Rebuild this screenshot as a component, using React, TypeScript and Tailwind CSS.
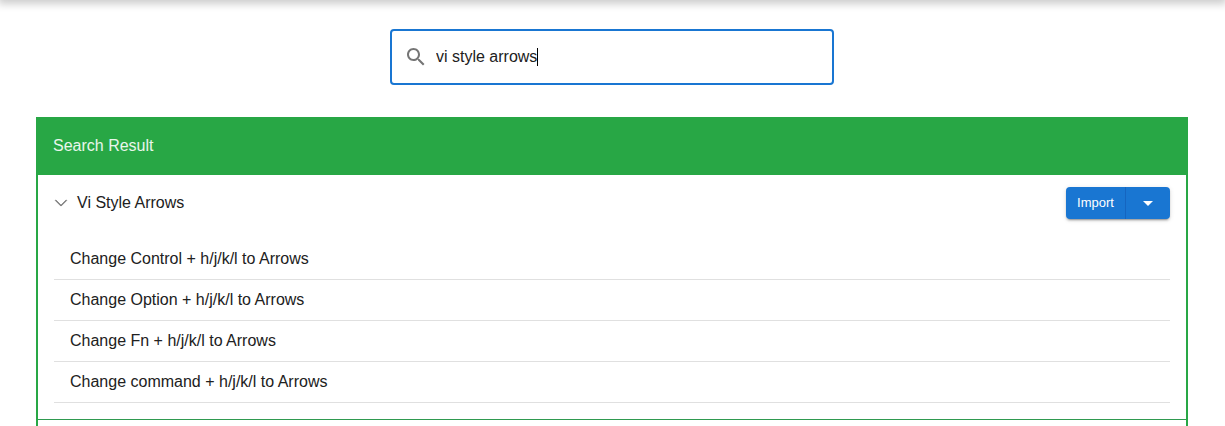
const rules = [
  "Change Control + h/j/k/l to Arrows",
  "Change Option + h/j/k/l to Arrows",
  "Change Fn + h/j/k/l to Arrows",
  "Change command + h/j/k/l to Arrows",
];

function SearchIcon() {
  return (
    <svg className="size-6 shrink-0 text-[#757575]" viewBox="0 0 24 24" fill="currentColor" aria-hidden="true">
      <path d="M15.5 14h-.79l-.28-.27C15.41 12.59 16 11.11 16 9.5 16 5.91 13.09 3 9.5 3S3 5.91 3 9.5 5.91 16 9.5 16c1.61 0 3.09-.59 4.23-1.57l.27.28v.79l5 4.99L20.49 19l-4.99-5zm-6 0C7.01 14 5 11.99 5 9.5S7.01 5 9.5 5 14 7.01 14 9.5 11.99 14 9.5 14z" />
    </svg>
  );
}

function SearchField() {
  return (
    <label className="mx-auto flex h-14 w-full max-w-[444px] cursor-text items-center rounded-sm border-2 border-[#1976d2] px-3">
      <SearchIcon />
      <input
        type="text"
        aria-label="Search"
        defaultValue="vi style arrows"
        className="ml-2 field-sizing-content min-w-0 bg-transparent text-base leading-6 caret-transparent outline-none"
      />
      <span className="h-[18px] w-px shrink-0 bg-black" aria-hidden="true" />
    </label>
  );
}

function ImportButtons() {
  return (
    <div className="flex h-8 w-[104px] rounded-sm bg-[#1976d2] text-[13px] text-white shadow-[0_3px_1px_-2px_rgba(0,0,0,0.2),0_2px_2px_0_rgba(0,0,0,0.14),0_1px_5px_0_rgba(0,0,0,0.12)]">
      <button type="button" className="flex w-[60px] items-center justify-center border-r border-[#1565c0]">
        Import
      </button>
      <button type="button" aria-label="More import options" className="flex flex-1 items-center justify-center">
        <svg className="size-6" viewBox="0 0 24 24" fill="currentColor" aria-hidden="true">
          <path d="m7 10 5 5 5-5z" />
        </svg>
      </button>
    </div>
  );
}

export default function App() {
  return (
    <div className="flex h-screen flex-col overflow-hidden bg-white font-['Liberation_Sans',Arial,sans-serif] text-base text-[#212121]">
      <header className="-mt-16 h-16 shrink-0 bg-white shadow-[0_2px_8px_2px_rgba(0,0,0,0.2)]" />
      <main className="flex w-full flex-1 flex-col pt-[29px] pr-[37px] pl-9">
        <SearchField />
        <section className="mt-8 flex flex-1 flex-col border-2 border-b-0 border-[#28a745]">
          <h2 className="flex h-14 shrink-0 items-center bg-[#28a745] px-[15px] pb-0.5 text-white/90">Search Result</h2>
          <div className="border-b border-[#2f9a50] pb-4">
            <div className="flex h-14 items-center justify-between px-4">
              <button type="button" aria-expanded="true" className="flex items-center gap-[9px]">
                <svg className="size-3.5 text-[#757575]" viewBox="0 0 16 16" fill="currentColor" stroke="currentColor" strokeWidth="0.6" aria-hidden="true">
                  <path
                    fillRule="evenodd"
                    d="M1.646 4.646a.5.5 0 0 1 .708 0L8 10.293l5.646-5.647a.5.5 0 0 1 .708.708l-6 6a.5.5 0 0 1-.708 0l-6-6a.5.5 0 0 1 0-.708z"
                  />
                </svg>
                Vi Style Arrows
              </button>
              <ImportButtons />
            </div>
            <ul className="px-4 pt-2">
              {rules.map((rule) => (
                <li key={rule} className="border-b border-[#e0e0e0] px-4 py-2 leading-6">
                  {rule}
                </li>
              ))}
            </ul>
          </div>
        </section>
      </main>
    </div>
  );
}
